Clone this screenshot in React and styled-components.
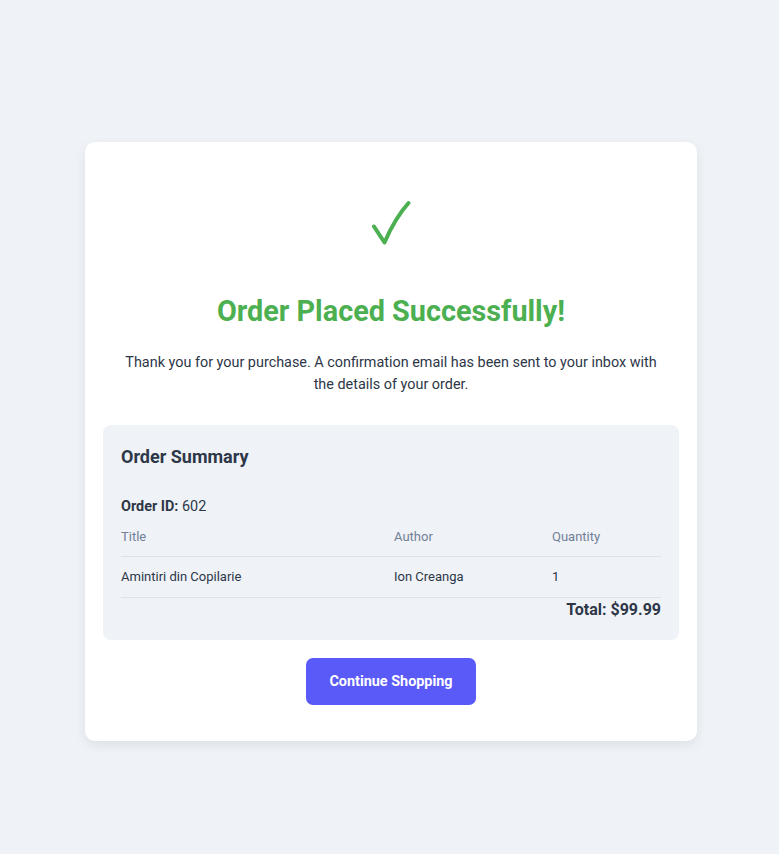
import React from 'react';
import styled, { createGlobalStyle } from 'styled-components';

const GlobalStyle = createGlobalStyle`
  body {
    margin: 0;
    background: #eff2f7;
    font-family: Roboto, "Noto Sans", sans-serif;
  }
`;

const Page = styled.div`
  min-height: 854px;
  display: flex;
  justify-content: center;
  align-items: flex-start;
  padding: 142px 0 0 3px;
  box-sizing: border-box;
`;

const Card = styled.div`
  width: 612px;
  box-sizing: border-box;
  background: #fff;
  border-radius: 10px;
  box-shadow: 0 4px 12px rgba(0, 0, 0, 0.08);
  padding: 36px 18px;
  text-align: center;
`;

// 체크 표시
const Check = styled.svg`
  display: block;
  margin: 22px auto 0;
  width: 40px;
  height: 46px;
`;

const Title = styled.h1`
  margin: 47px 0 0;
  font-size: 28.8px;
  line-height: 36px;
  font-weight: 700;
  color: #4caf50;
`;

const Message = styled.p`
  margin: 23px 0 0;
  padding: 0 12px;
  font-size: 14.4px;
  line-height: 22px;
  color: #2d3748;
`;

// 주문 요약
const Summary = styled.div`
  margin-top: 29px;
  background: #eff2f7;
  border-radius: 8px;
  padding: 19px 18px 18px;
  text-align: left;
  color: #2d3748;
`;

const SummaryTitle = styled.h2`
  margin: 0;
  font-size: 18px;
  line-height: 26px;
  font-weight: 700;
`;

const OrderId = styled.div`
  margin-top: 27px;
  font-size: 14.4px;
  line-height: 20px;
  b {
    font-weight: 700;
  }
`;

const Table = styled.table`
  width: 100%;
  border-collapse: collapse;
  margin-top: 12px;
  font-size: 13px;
  line-height: 16px;
`;

const Th = styled.th`
  text-align: left;
  font-weight: 400;
  color: #718096;
  padding: 0 0 11px;
  border-bottom: 1px solid #dde2e8;
  width: ${(p) => p.w || 'auto'};
`;

const Td = styled.td`
  padding: 12px 0;
  border-bottom: 1px solid #dde2e8;
  color: #2d3748;
`;

const Total = styled.div`
  text-align: right;
  font-size: 16px;
  font-weight: 700;
  line-height: 24px;
`;

const Button = styled.button`
  display: block;
  margin: 18px auto 0;
  background: #5a5af8;
  color: #fff;
  border: none;
  border-radius: 7px;
  padding: 0 23px;
  height: 47px;
  font-family: inherit;
  font-size: 14.4px;
  font-weight: 700;
  cursor: pointer;
`;

const App = () => {
  return (
    <>
      <GlobalStyle />
      <Page>
        <Card>
          <Check viewBox="0 0 40 46" fill="none">
            <path
              d="M3 26.5 L13.5 42.5 C18 32 25 17 37.5 3"
              stroke="#4caf50"
              strokeWidth="4"
              strokeLinecap="round"
              strokeLinejoin="round"
            />
          </Check>
          <Title>Order Placed Successfully!</Title>
          <Message>
            Thank you for your purchase. A confirmation email has been sent to your inbox with the details of your order.
          </Message>
          <Summary>
            <SummaryTitle>Order Summary</SummaryTitle>
            <OrderId>
              <b>Order ID:</b> 602
            </OrderId>
            <Table>
              <thead>
                <tr>
                  <Th w="273px">Title</Th>
                  <Th w="158px">Author</Th>
                  <Th>Quantity</Th>
                </tr>
              </thead>
              <tbody>
                <tr>
                  <Td>Amintiri din Copilarie</Td>
                  <Td>Ion Creanga</Td>
                  <Td>1</Td>
                </tr>
              </tbody>
            </Table>
            <Total>Total: $99.99</Total>
          </Summary>
          <Button>Continue Shopping</Button>
        </Card>
      </Page>
    </>
  );
};

export default App;
